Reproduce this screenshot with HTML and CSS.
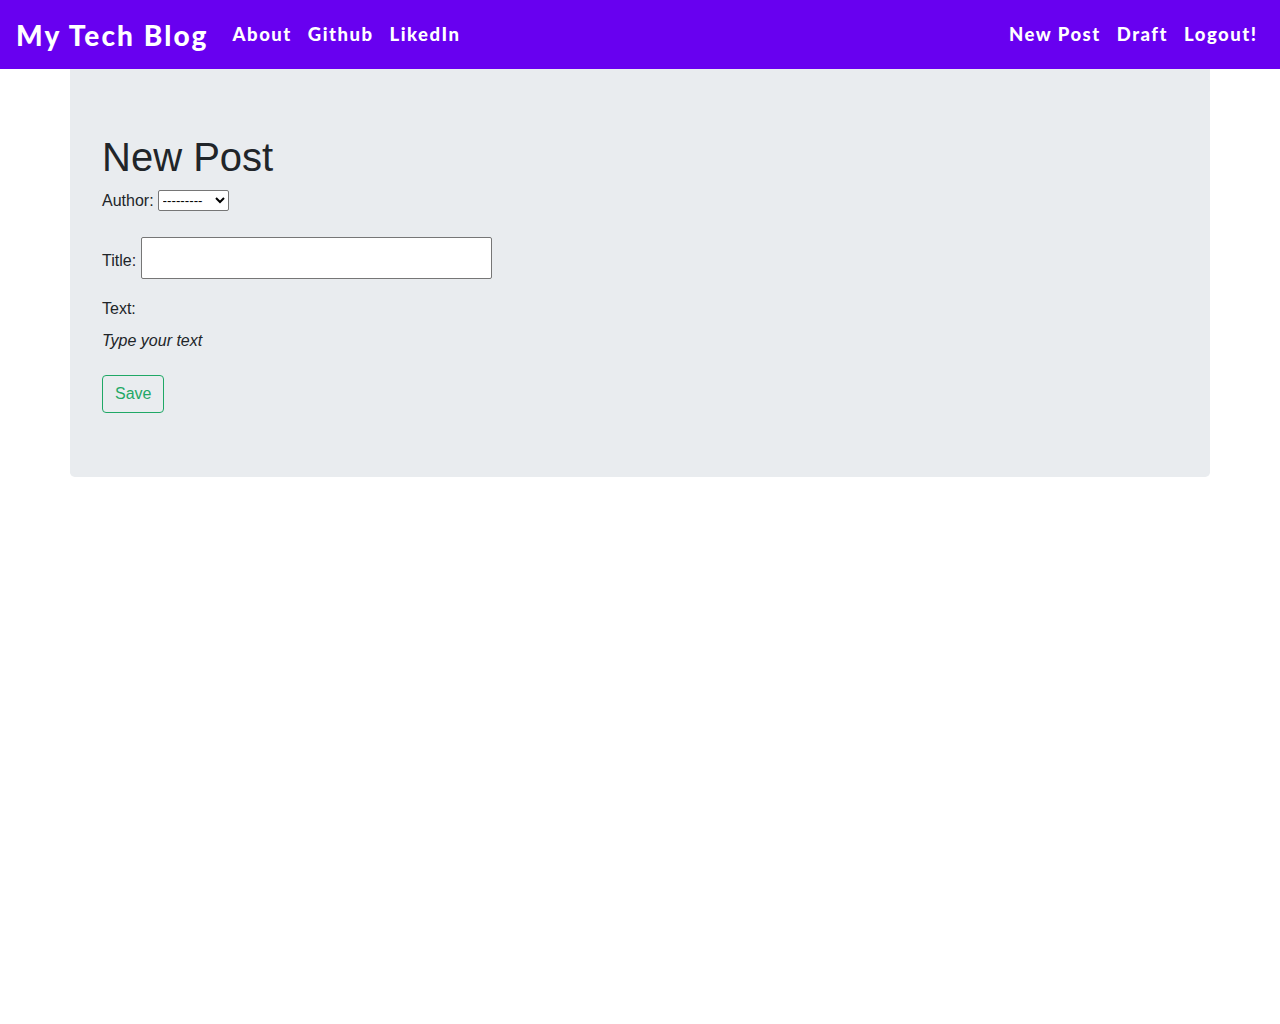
FILE: index.html
```html
<!DOCTYPE html>
<html lang="en">
<head>
<meta charset="utf-8">
<title>My Tech Blog</title>
<link rel="stylesheet" href="styles.css">
</head>
<body>
<nav class="navbar">
  <div class="nav-left">
    <a class="brand" href="#">My Tech Blog</a>
    <a class="nav-link" href="#">About</a>
    <a class="nav-link" href="#">Github</a>
    <a class="nav-link" href="#">LikedIn</a>
  </div>
  <div class="nav-right">
    <a class="nav-link" href="#">New Post</a>
    <a class="nav-link" href="#">Draft</a>
    <a class="nav-link" href="#">Logout!</a>
  </div>
</nav>
<main class="container">
  <div class="jumbotron">
    <h1 class="title">New Post</h1>
    <form class="post-form">
      <p class="field field-author"><label>Author:</label> <select class="select"><option>---------</option></select></p>
      <p class="field field-title"><label class="title-label">Title:</label> <input class="text-input" type="text"></p>
      <p class="field field-text"><label>Text:</label></p>
      <div class="editor">Type your text</div>
      <button type="button" class="btn-save">Save</button>
    </form>
  </div>
</main>
</body>
</html>
```
FILE: styles.css
```css
* { box-sizing: border-box; }
body {
  margin: 0;
  font-family: "Liberation Sans", Arial, sans-serif;
  font-size: 16px;
  line-height: 1.5;
  color: #212529;
  background: #fff;
}
.navbar {
  height: 69px;
  background: #6800f0;
  display: flex;
  align-items: center;
  justify-content: space-between;
  padding: 0 16px;
}
.nav-left, .nav-right {
  display: flex;
  align-items: center;
}
.navbar a {
  color: #fff;
  text-decoration: none;
  font-family: "Lato", "DejaVu Sans", sans-serif;
  font-weight: 900;
}
.brand {
  font-size: 28px;
  margin-right: 16px;
  letter-spacing: 2.1px;
}
.nav-link {
  font-size: 18.5px;
  padding: 0 8px;
  letter-spacing: 1.5px;
}
.nav-right .nav-link:last-child { padding-right: 8px; margin-right: -1.5px; }
.container {
  width: 1140px;
  margin: 0 auto;
}
.jumbotron {
  background: #e9ecef;
  border-radius: 0 0 4.8px 4.8px;
  padding: 64px 32px;
}
.title {
  margin: 0 0 8px;
  font-size: 40px;
  font-weight: 400;
  line-height: 1.2;
}
.post-form { margin: 0; }
.field { margin: 0; }
.field-author {
  height: 24px;
  display: flex;
  align-items: center;
  gap: 4px;
}
.select {
  font-family: "Liberation Sans", Arial, sans-serif;
  font-size: 13.33px;
  height: 21px;
  width: 71px;
  border: 1px solid #767676;
  border-radius: 2px;
  background: #fff;
  color: #000;
  padding: 0;
  margin-top: -1px;
}
.field-title {
  margin-top: 24px;
  display: flex;
  align-items: center;
  gap: 5px;
  height: 42px;
}
.title-label { margin-top: 6px; }
.text-input {
  width: 351px;
  height: 42px;
  border: 1px solid #767676;
  border-radius: 2px;
  background: #fff;
  margin: 0;
}
.field-text {
  margin-top: 18px;
  height: 24px;
}
.editor {
  margin-top: 8px;
  font-style: italic;
  height: 24px;
}
.btn-save {
  margin-top: 22px;
  display: block;
  height: 38px;
  padding: 0 12px;
  font-family: "Liberation Sans", Arial, sans-serif;
  font-size: 16px;
  color: #1fa866;
  background: transparent;
  border: 1px solid #1fa866;
  border-radius: 4px;
}
```
